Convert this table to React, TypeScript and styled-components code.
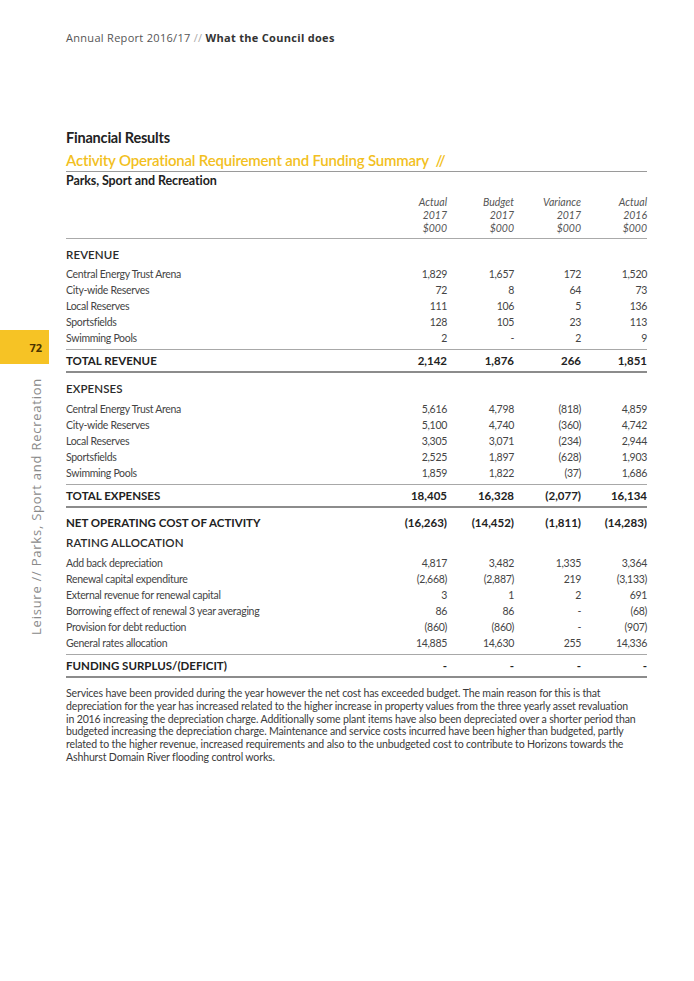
import React from "react";
import styled, { createGlobalStyle } from "styled-components";

const Global = createGlobalStyle`
  html, body { margin: 0; padding: 0; background: #ffffff; }
  body { font-family: "Lato", "Liberation Sans", sans-serif; color: #333; }
`;

const Page = styled.div`
  width: 694px;
  min-height: 981px;
  display: flex;
  background: #fff;
`;

const Aside = styled.aside`
  width: 66px;
  flex: none;
  padding-top: 330px;
  display: flex;
  flex-direction: column;
`;

const Tab = styled.div`
  width: 49px;
  height: 34px;
  background: #f6c325;
  display: flex;
  align-items: center;
  justify-content: flex-end;
  padding-right: 7px;
  box-sizing: border-box;
  font-family: "Open Sans", sans-serif;
  font-weight: 700;
  font-size: 11px;
  color: #4a3300;
`;

const SideLabel = styled.div`
  margin-top: 14px;
  margin-left: 27px;
  writing-mode: vertical-rl;
  transform: rotate(180deg);
  font-family: "Open Sans", sans-serif;
  font-size: 13px;
  letter-spacing: 0.75px;
  line-height: 18px;
  color: #8a8a8a;
  white-space: nowrap;
`;

const Main = styled.main`
  width: 581px;
  flex: none;
  display: flex;
  flex-direction: column;
`;

const RunningHead = styled.header`
  padding-top: 30px;
  font-family: "Open Sans", sans-serif;
  font-size: 11px;
  line-height: 16px;
  letter-spacing: 0.3px;
  color: #555;
  white-space: nowrap;
`;

const Slashes = styled.span`
  color: #aaa;
`;

const HeadBold = styled.b`
  font-weight: 700;
  color: #333;
`;

const PageTitle = styled.h1`
  margin: 83px 0 0;
  font-size: 14.5px;
  line-height: 18px;
  font-weight: 700;
  color: #222;
  letter-spacing: -0.2px;
`;

const SectionTitle = styled.h2`
  margin: 4px 0 0;
  padding-bottom: 2px;
  font-size: 15px;
  line-height: 18px;
  font-weight: 600;
  color: #f2bf22;
  border-bottom: 1px solid #9a9a9a;
  letter-spacing: -0.2px;
`;

const SubTitle = styled.h3`
  margin: 1px 0 0;
  font-size: 12.5px;
  line-height: 16px;
  font-weight: 700;
  color: #222;
  letter-spacing: -0.1px;
`;

const Grid = styled.div`
  display: grid;
  grid-template-columns: 1fr 67px 67px 67px 66px;
  align-items: center;
`;

const ColHead = styled(Grid)`
  margin-top: 7px;
  padding-bottom: 3px;
  border-bottom: 1px solid #aaa;
  font-style: italic;
  font-size: 10.5px;
  line-height: 13px;
  color: #555;
`;

const HeadCell = styled.div`
  text-align: right;
`;

const GroupTitle = styled.div<{ $gap?: number }>`
  margin-top: ${(p) => p.$gap ?? 8}px;
  font-size: 11.5px;
  line-height: 16px;
  font-weight: 600;
  color: #2a2a2a;
  letter-spacing: 0.1px;
`;

const Rows = styled.div<{ $gap?: number }>`
  margin-top: ${(p) => p.$gap ?? 3}px;
  padding-bottom: 3px;
`;

const Row = styled(Grid)`
  height: 16px;
  font-size: 10.5px;
  line-height: 16px;
  color: #444;
  letter-spacing: -0.3px;
`;

const Label = styled.div`
  white-space: nowrap;
`;

const Num = styled.div`
  text-align: right;
  white-space: nowrap;
`;

const TotalRow = styled(Grid)`
  border-top: 1px solid #a8a8a8;
  border-bottom: 2px solid #8c8c8c;
  padding: 2px 0 1px;
  font-size: 11.5px;
  line-height: 18px;
  font-weight: 700;
  color: #222;
`;

const NetRow = styled(Grid)`
  margin-top: 6px;
  font-size: 11.5px;
  line-height: 18px;
  font-weight: 700;
  color: #222;
`;

const Para = styled.p`
  margin: 9px 0 0;
  font-size: 10.55px;
  line-height: 12.8px;
  color: #3a3a3a;
  letter-spacing: -0.15px;
  white-space: nowrap;
`;

type R = [string, string, string, string, string];

const revenue: R[] = [
  ["Central Energy Trust Arena", "1,829", "1,657", "172", "1,520"],
  ["City-wide Reserves", "72", "8", "64", "73"],
  ["Local Reserves", "111", "106", "5", "136"],
  ["Sportsfields", "128", "105", "23", "113"],
  ["Swimming Pools", "2", "-", "2", "9"],
];

const expenses: R[] = [
  ["Central Energy Trust Arena", "5,616", "4,798", "(818)", "4,859"],
  ["City-wide Reserves", "5,100", "4,740", "(360)", "4,742"],
  ["Local Reserves", "3,305", "3,071", "(234)", "2,944"],
  ["Sportsfields", "2,525", "1,897", "(628)", "1,903"],
  ["Swimming Pools", "1,859", "1,822", "(37)", "1,686"],
];

const rating: R[] = [
  ["Add back depreciation", "4,817", "3,482", "1,335", "3,364"],
  ["Renewal capital expenditure", "(2,668)", "(2,887)", "219", "(3,133)"],
  ["External revenue for renewal capital", "3", "1", "2", "691"],
  ["Borrowing effect of renewal 3 year averaging", "86", "86", "-", "(68)"],
  ["Provision for debt reduction", "(860)", "(860)", "-", "(907)"],
  ["General rates allocation", "14,885", "14,630", "255", "14,336"],
];

const paragraph = [
  "Services have been provided during the year however the net cost has exceeded budget. The main reason for this is that",
  "depreciation for the year has increased related to the higher increase in property values from the three yearly asset revaluation",
  "in 2016 increasing the depreciation charge. Additionally some plant items have also been depreciated over a shorter period than",
  "budgeted increasing the depreciation charge. Maintenance and service costs incurred have been higher than budgeted, partly",
  "related to the higher revenue, increased requirements and also to the unbudgeted cost to contribute to Horizons towards the",
  "Ashhurst Domain River flooding control works.",
];

const Cells = ({ r }: { r: R }) => (
  <>
    <Label>{r[0]}</Label>
    <Num>{r[1]}</Num>
    <Num>{r[2]}</Num>
    <Num>{r[3]}</Num>
    <Num>{r[4]}</Num>
  </>
);

const DataRows = ({ rows, gap }: { rows: R[]; gap?: number }) => (
  <Rows $gap={gap}>
    {rows.map((r) => (
      <Row key={r[0]}>
        <Cells r={r} />
      </Row>
    ))}
  </Rows>
);

export default function App() {
  return (
    <>
      <Global />
      <Page>
        <Aside>
          <Tab>72</Tab>
          <SideLabel>Leisure // Parks, Sport and Recreation</SideLabel>
        </Aside>
        <Main>
          <RunningHead>
            Annual Report 2016/17 <Slashes>//</Slashes> <HeadBold>What the Council does</HeadBold>
          </RunningHead>
          <PageTitle>Financial Results</PageTitle>
          <SectionTitle>Activity Operational Requirement and Funding Summary&nbsp;&nbsp;//</SectionTitle>
          <SubTitle>Parks, Sport and Recreation</SubTitle>
          <ColHead>
            <div />
            <HeadCell>Actual<br />2017<br />$000</HeadCell>
            <HeadCell>Budget<br />2017<br />$000</HeadCell>
            <HeadCell>Variance<br />2017<br />$000</HeadCell>
            <HeadCell>Actual<br />2016<br />$000</HeadCell>
          </ColHead>
          <GroupTitle>REVENUE</GroupTitle>
          <DataRows rows={revenue} />
          <TotalRow>
            <Cells r={["TOTAL REVENUE", "2,142", "1,876", "266", "1,851"]} />
          </TotalRow>
          <GroupTitle $gap={8}>EXPENSES</GroupTitle>
          <DataRows rows={expenses} gap={4} />
          <TotalRow>
            <Cells r={["TOTAL EXPENSES", "18,405", "16,328", "(2,077)", "16,134"]} />
          </TotalRow>
          <NetRow>
            <Cells r={["NET OPERATING COST OF ACTIVITY", "(16,263)", "(14,452)", "(1,811)", "(14,283)"]} />
          </NetRow>
          <GroupTitle $gap={3}>RATING ALLOCATION</GroupTitle>
          <DataRows rows={rating} gap={4} />
          <TotalRow>
            <Cells r={["FUNDING SURPLUS/(DEFICIT)", "-", "-", "-", "-"]} />
          </TotalRow>
          <Para>
            {paragraph.map((line, i) => (
              <React.Fragment key={i}>
                {line}
                {i < paragraph.length - 1 && <br />}
              </React.Fragment>
            ))}
          </Para>
        </Main>
      </Page>
    </>
  );
}
